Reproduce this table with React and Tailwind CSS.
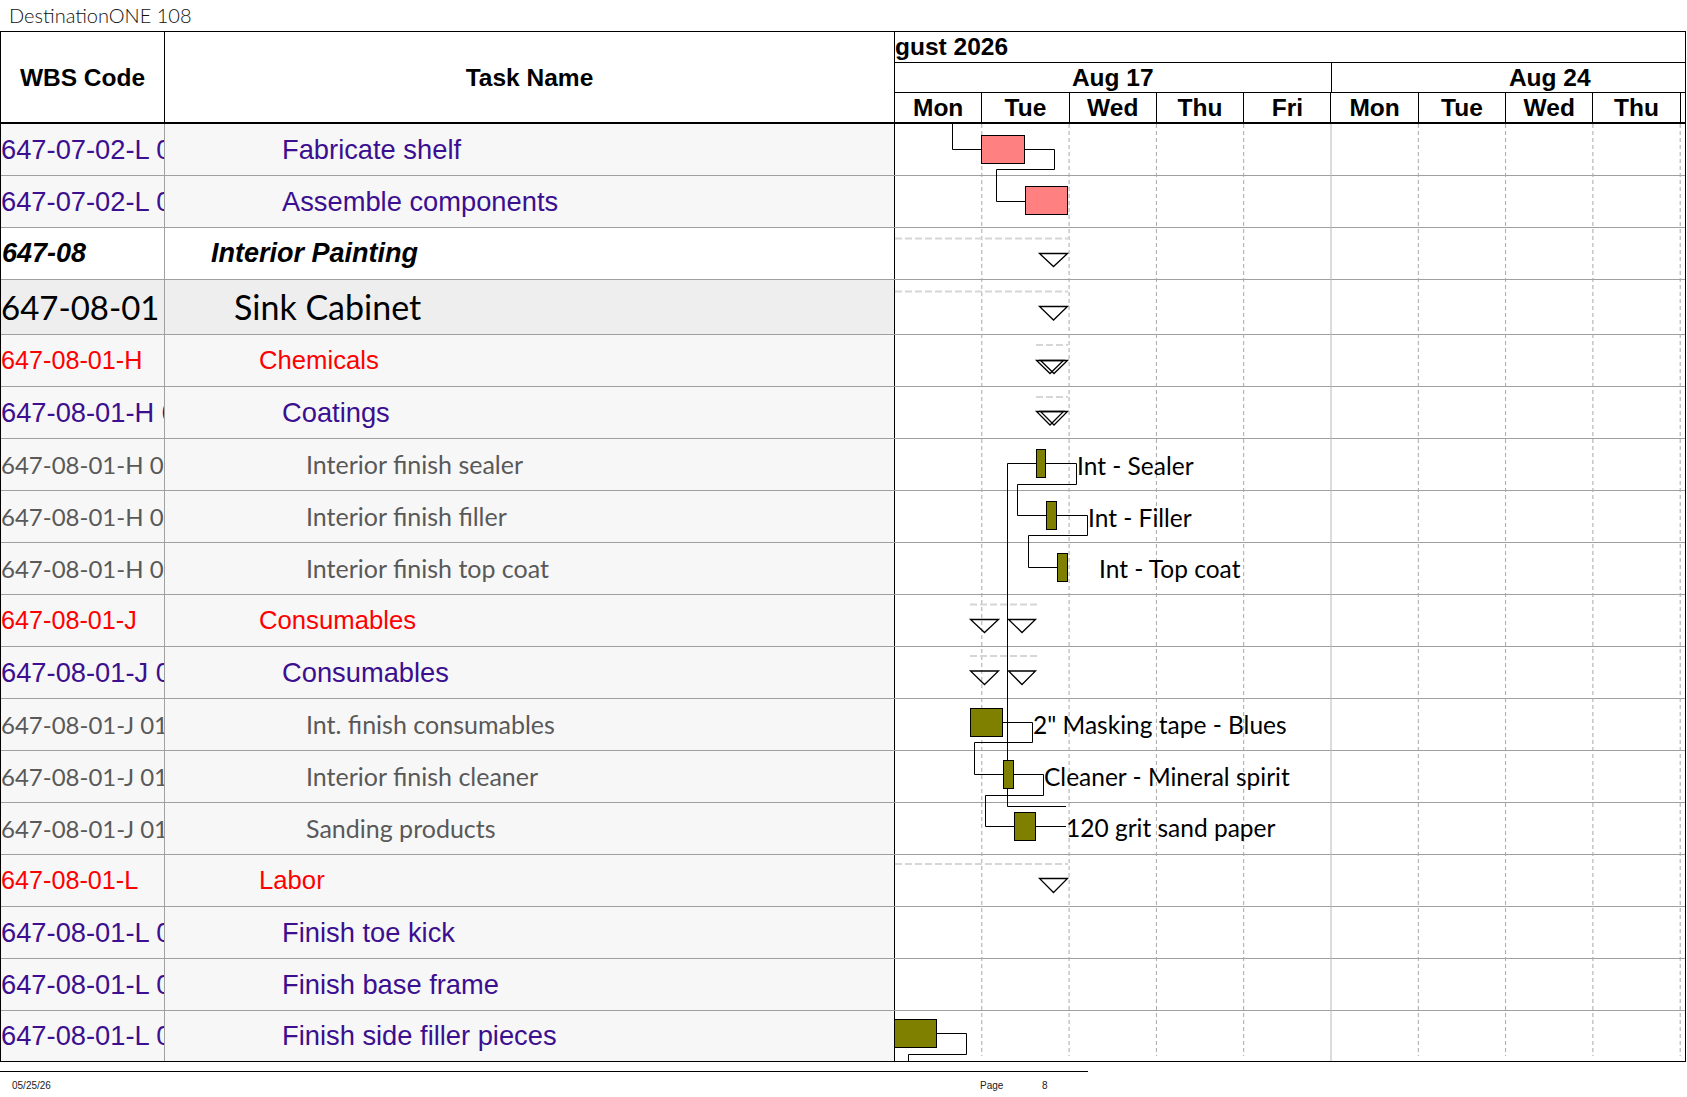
import React from "react";

const ARIAL = "font-['Liberation_Sans',Arial,sans-serif]";
const CAL = "font-['Lato','Open_Sans',sans-serif]";

const ROWS = [
  { wbs: "647-07-02-L 01", name: "Fabricate shelf", kind: "task" },
  { wbs: "647-07-02-L 02", name: "Assemble components", kind: "task" },
  { wbs: "647-08", name: "Interior Painting", kind: "phase" },
  { wbs: "647-08-01", name: "Sink Cabinet", kind: "item" },
  { wbs: "647-08-01-H", name: "Chemicals", kind: "group" },
  { wbs: "647-08-01-H 01", name: "Coatings", kind: "task" },
  { wbs: "647-08-01-H 01 01", name: "Interior finish sealer", kind: "res" },
  { wbs: "647-08-01-H 01 02", name: "Interior finish filler", kind: "res" },
  { wbs: "647-08-01-H 01 03", name: "Interior finish top coat", kind: "res" },
  { wbs: "647-08-01-J", name: "Consumables", kind: "group" },
  { wbs: "647-08-01-J 01", name: "Consumables", kind: "task" },
  { wbs: "647-08-01-J 01 01", name: "Int. finish consumables", kind: "res" },
  { wbs: "647-08-01-J 01 02", name: "Interior finish cleaner", kind: "res" },
  { wbs: "647-08-01-J 01 03", name: "Sanding products", kind: "res" },
  { wbs: "647-08-01-L", name: "Labor", kind: "group" },
  { wbs: "647-08-01-L 01", name: "Finish toe kick", kind: "task" },
  { wbs: "647-08-01-L 02", name: "Finish base frame", kind: "task" },
  { wbs: "647-08-01-L 03", name: "Finish side filler pieces", kind: "task" },
];

const STYLE = {
  task: {
    text: `${ARIAL} text-[27.3px] text-[#3b0f8f]`,
    code: `${ARIAL} text-[27.3px] text-[#3b0f8f]`,
    pad: "pl-[117px]",
    bg: "bg-[#f7f7f7]",
  },
  phase: {
    text: `${ARIAL} text-[27px] font-bold italic text-black`,
    code: `${ARIAL} text-[27px] font-bold italic text-black pl-[1px]`,
    pad: "pl-[46px]",
    bg: "bg-white",
  },
  item: {
    text: `${CAL} text-[34px] text-black`,
    code: `${CAL} text-[33px] text-black`,
    pad: "pl-[69px]",
    bg: "bg-[#eeeeee]",
  },
  group: {
    text: `${ARIAL} text-[25.7px] text-[#ff0000]`,
    code: `${ARIAL} text-[25.2px] text-[#ff0000]`,
    pad: "pl-[94px]",
    bg: "bg-[#f7f7f7]",
  },
  res: {
    text: `${CAL} text-[25px] text-[#595959]`,
    code: `${CAL} text-[24px] text-[#595959]`,
    pad: "pl-[141px]",
    bg: "bg-[#f7f7f7]",
  },
};

const DAYS = ["Mon", "Tue", "Wed", "Thu", "Fri", "Mon", "Tue", "Wed", "Thu", "Fri"];
const dayX = (k) => 895 + 87.3 * k - 0.5;

const tri = (x1, x2, y1, y2) => `${x1},${y1} ${x2},${y1} ${(x1 + x2) / 2},${y2}`;

const BARS = [
  { x: 981.5, y: 135.5, w: 43, fill: "#ff8080" },
  { x: 1025.5, y: 186.5, w: 42, fill: "#ff8080" },
  { x: 1036.5, y: 449.5, w: 9, fill: "#808000" },
  { x: 1046.5, y: 501.5, w: 10, fill: "#808000" },
  { x: 1057.5, y: 553.5, w: 10, fill: "#808000" },
  { x: 970.5, y: 708.5, w: 32, fill: "#808000" },
  { x: 1003.5, y: 760.5, w: 10, fill: "#808000" },
  { x: 1014.5, y: 812.5, w: 21, fill: "#808000" },
  { x: 894.5, y: 1019.5, w: 42, fill: "#808000" },
];

const LINKS = [
  "952.5,124 952.5,149.5 981.5,149.5",
  "1024.5,149.5 1054.5,149.5 1054.5,169.5 996.5,169.5 996.5,201.5 1025.5,201.5",
  "1007.5,463.5 1036.5,463.5",
  "1045.5,463.5 1076.5,463.5 1076.5,484.5 1017.5,484.5 1017.5,515.5 1046.5,515.5",
  "1007.5,463.5 1007.5,806.5 1066,806.5",
  "1056.5,515.5 1087.5,515.5 1087.5,535.5 1028.5,535.5 1028.5,567.5 1057.5,567.5",
  "1002.5,722.5 1032.5,722.5 1032.5,742.5 974.5,742.5 974.5,774.5 1003.5,774.5",
  "1013.5,774.5 1043.5,774.5 1043.5,795.5 985.5,795.5 985.5,826.5 1014.5,826.5",
  "1035.5,826.5 1066,826.5",
  "936.5,1033.5 966.5,1033.5 966.5,1054.5 908.5,1054.5 908.5,1062",
];

const SUMMARY = [
  { x1: 895, x2: 1068, y: 238.5 },
  { x1: 895, x2: 1068, y: 291.5 },
  { x1: 1036, x2: 1068, y: 345 },
  { x1: 1036, x2: 1068, y: 397 },
  { x1: 970, x2: 1037, y: 604.5 },
  { x1: 970, x2: 1037, y: 656 },
  { x1: 895, x2: 1068, y: 864 },
];

const TRIS = [
  tri(1039.5, 1067.5, 253.5, 266.5),
  tri(1039.5, 1067.5, 306.5, 320),
  tri(1036.5, 1063.5, 360.5, 373.5),
  tri(1040.5, 1067.5, 360.5, 373.5),
  tri(1036.5, 1063.5, 411.5, 425),
  tri(1040.5, 1067.5, 411.5, 425),
  tri(970.5, 998.5, 619.5, 632.5),
  tri(1008.5, 1035.5, 619.5, 632.5),
  tri(970.5, 998.5, 671, 684.5),
  tri(1008.5, 1035.5, 671, 684.5),
  tri(1039.5, 1067.5, 878.5, 892.5),
];

const LABELS = [
  { x: 1077, y: 474.5, t: "Int - Sealer" },
  { x: 1088, y: 526.5, t: "Int - Filler" },
  { x: 1099, y: 577.5, t: "Int - Top coat" },
  { x: 1033, y: 733.5, t: '2" Masking tape - Blues' },
  { x: 1044, y: 785.5, t: "Cleaner - Mineral spirit" },
  { x: 1066, y: 836.5, t: "120 grit sand paper" },
];

function GanttDrawing() {
  return (
    <svg
      className="absolute top-0 left-[894px] w-[790px] h-[937px] pointer-events-none"
      viewBox="895 124 790 937"
    >
      {DAYS.slice(1).map((_, i) => {
        const k = i + 1;
        const x = dayX(k);
        return k === 5 ? (
          <line key={k} x1={x} x2={x} y1={124} y2={1061} stroke="#b8b8b8" strokeWidth="1" />
        ) : (
          <line
            key={k}
            x1={x}
            x2={x}
            y1={124}
            y2={1056}
            stroke="#a8a8a8"
            strokeWidth="1"
            strokeDasharray="4 3"
          />
        );
      })}
      {SUMMARY.map((s, i) => (
        <line
          key={i}
          x1={s.x1}
          x2={s.x2}
          y1={s.y}
          y2={s.y}
          stroke="#d6d6d6"
          strokeWidth="2"
          strokeDasharray="7 3"
        />
      ))}
      {LINKS.map((p, i) => (
        <polyline key={i} points={p} fill="none" stroke="#000" strokeWidth="1" />
      ))}
      {TRIS.map((p, i) => (
        <polygon key={i} points={p} fill="none" stroke="#000" strokeWidth="1.3" />
      ))}
      {BARS.map((b, i) => (
        <rect key={i} x={b.x} y={b.y} width={b.w} height={28} fill={b.fill} stroke="#000" strokeWidth="1" />
      ))}
      {LABELS.map((l, i) => (
        <text key={i} x={l.x} y={l.y} fontFamily="Lato, 'Open Sans', sans-serif" fontSize="24.5" fill="#000">
          {l.t}
        </text>
      ))}
    </svg>
  );
}

function Row({ row, last }) {
  const s = STYLE[row.kind];
  const h = row.kind === "item" ? "h-[55px]" : last ? "h-[50px]" : "h-[52px]";
  return (
    <div className={`flex ${h} ${last ? "" : "border-b border-[#a0a0a0]"}`}>
      <div
        className={`w-[164px] shrink-0 border-r border-[#a0a0a0] ${s.bg} flex items-center overflow-hidden whitespace-nowrap`}
      >
        <span className={`${s.code} leading-none`}>{row.wbs}</span>
      </div>
      <div
        className={`w-[730px] shrink-0 border-r border-black ${s.bg} ${s.pad} flex items-center overflow-hidden whitespace-nowrap`}
      >
        <span className={`${s.text} leading-none`}>{row.name}</span>
      </div>
      <div className="w-[790px] shrink-0 bg-white" />
    </div>
  );
}

export default function App() {
  return (
    <div className="w-[1687px] h-[1097px] bg-white overflow-hidden relative">
      <div className="h-[31px] pl-[9px] pt-[3px] font-['Lato',sans-serif] font-light text-[20px] leading-[24px] text-[#111]">
        DestinationONE 108
      </div>

      <div className="w-[1686px] border border-black">
        {/* header */}
        <div className={`flex h-[92px] border-b-2 border-black ${ARIAL} font-bold text-[24.5px] text-black`}>
          <div className="w-[164px] shrink-0 border-r border-black flex items-center justify-center pt-[3px]">
            WBS Code
          </div>
          <div className="w-[730px] shrink-0 border-r border-black flex items-center justify-center pt-[3px]">
            Task Name
          </div>
          <div className="w-[790px] shrink-0 overflow-hidden">
            <div className="h-[31px] border-b border-black flex items-center whitespace-nowrap leading-none">
              gust 2026
            </div>
            <div className="h-[30px] border-b border-black flex w-[873px] leading-none">
              <div className="w-[436.5px] shrink-0 border-r border-black flex items-center justify-center pt-[1px]">
                Aug 17
              </div>
              <div className="w-[436.5px] shrink-0 flex items-center justify-center pt-[1px]">Aug 24</div>
            </div>
            <div className="h-[29px] flex w-[873px] leading-none">
              {DAYS.map((d, i) => (
                <div
                  key={i}
                  className="w-[87.3px] shrink-0 border-r border-black flex items-center justify-center pt-[1px]"
                >
                  {d}
                </div>
              ))}
            </div>
          </div>
        </div>

        {/* body */}
        <div className="relative">
          {ROWS.map((r, i) => (
            <Row key={i} row={r} last={i === ROWS.length - 1} />
          ))}
          <GanttDrawing />
        </div>
      </div>

      {/* footer */}
      <div className="mt-[9px] w-[1088px] h-px bg-black" />
      <div className={`flex items-center h-[26px] ${ARIAL} text-[10px] text-[#222]`}>
        <span className="w-[980px] pl-[12px]">05/25/26</span>
        <span className="w-[62px]">Page</span>
        <span>8</span>
      </div>
    </div>
  );
}
